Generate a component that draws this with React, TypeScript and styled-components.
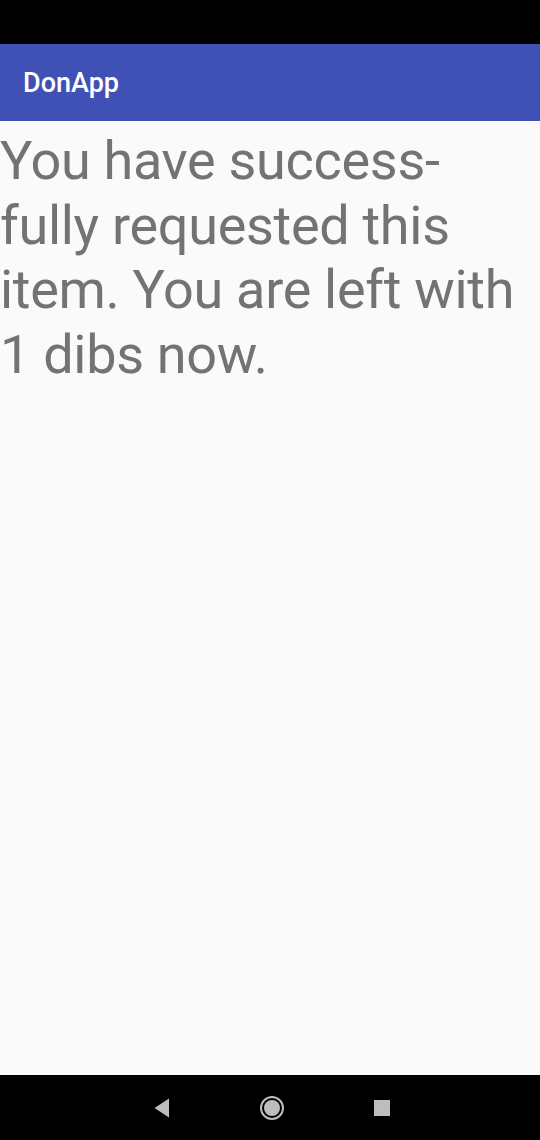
import React from "react";
import styled, { createGlobalStyle } from "styled-components";

const Global = createGlobalStyle`
  html, body { margin: 0; padding: 0; }
  body { background: #fafafa; font-family: Roboto, "Noto Sans", sans-serif; }
`;

const Screen = styled.div`
  width: 540px;
  height: 1140px;
  display: flex;
  flex-direction: column;
  background: #fafafa;
  overflow: hidden;
`;

const StatusBar = styled.div`
  height: 44px;
  flex: none;
  background: #000;
`;

const AppBar = styled.header`
  height: 77px;
  flex: none;
  background: #3f51b5;
  display: flex;
  align-items: center;
  padding-left: 23px;
`;

const Title = styled.h1`
  margin: 0;
  color: #fff;
  font-family: Roboto, sans-serif;
  font-weight: 500;
  font-size: 27px;
  letter-spacing: 0;
`;

const Content = styled.main`
  flex: 1;
  padding-top: 8px;
`;

const Message = styled.p`
  margin: 0;
  color: #737373;
  font-family: Roboto, sans-serif;
  font-size: 54px;
  line-height: 64.5px;
  font-weight: 400;
  letter-spacing: -0.3px;
  hyphens: manual;
`;

const NavBar = styled.nav`
  height: 65px;
  flex: none;
  background: #000;
  display: grid;
  grid-template-columns: repeat(3, 24px);
  justify-content: center;
  column-gap: 86px;
  align-items: center;
  padding-left: 4px;
`;

const NavSlot = styled.div`
  display: flex;
  align-items: center;
  justify-content: center;
  height: 24px;
`;

export default function App() {
  return (
    <>
      <Global />
      <Screen>
        <StatusBar />
        <AppBar>
          <Title>DonApp</Title>
        </AppBar>
        <Content>
          <Message>
            You have success-
            <br />
            fully requested this item. You are left with 1 dibs now.
          </Message>
        </Content>
        <NavBar>
          <NavSlot>
            <svg width="16" height="20" viewBox="0 0 16 20">
              <polygon points="15,0.5 15,19.5 0.5,10" fill="#bdbdbd" />
            </svg>
          </NavSlot>
          <NavSlot>
            <svg width="24" height="24" viewBox="0 0 24 24">
              <circle cx="12" cy="12" r="11" fill="none" stroke="#bdbdbd" strokeWidth="2" />
              <circle cx="12" cy="12" r="8" fill="#bdbdbd" />
            </svg>
          </NavSlot>
          <NavSlot>
            <svg width="16" height="16" viewBox="0 0 16 16">
              <rect x="0" y="0" width="16" height="16" fill="#bdbdbd" />
            </svg>
          </NavSlot>
        </NavBar>
      </Screen>
    </>
  );
}
